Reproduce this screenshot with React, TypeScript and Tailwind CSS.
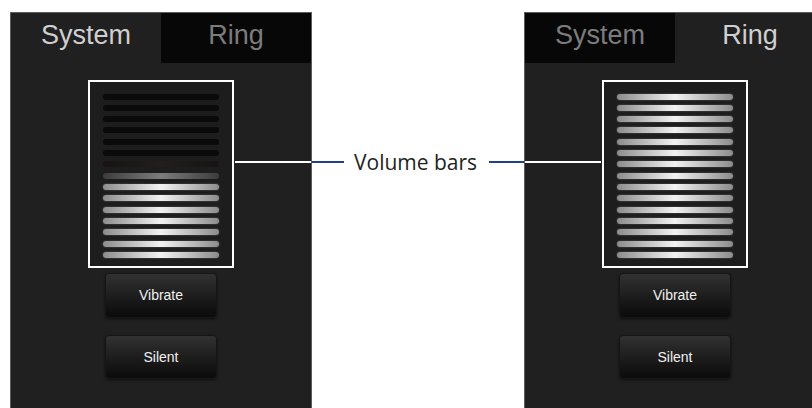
type Level = 'off' | 'faint' | 'dim' | 'on'

const SYSTEM_LEVELS: Level[] = [
  'off', 'off', 'off', 'off', 'off', 'off', 'faint', 'dim',
  'on', 'on', 'on', 'on', 'on', 'on', 'on',
]
const RING_LEVELS: Level[] = Array(15).fill('on')

const BAR_CLASSES: Record<Level, string> = {
  off: 'bg-[#0a0a0a]',
  faint: 'bg-[linear-gradient(to_right,#181414,#231d1d_50%,#181414)]',
  dim: 'bg-[linear-gradient(to_right,#3c3c3c,#7c7c7c_50%,#3c3c3c)]',
  on: 'bg-[linear-gradient(to_right,#8c8c8c,#f2f2f2_50%,#8c8c8c)] shadow-[0_0_2px_rgba(255,255,255,0.3)]',
}

function VolumeBox({ levels }: { levels: Level[] }) {
  return (
    <div className="w-[146px] h-[188px] mt-[17px] border-2 border-white bg-[#1d1d1d] px-[13px] pt-[11.5px] flex flex-col gap-[5.33px]">
      {levels.map((lv, i) => (
        <div key={i} className={`h-[6px] rounded-full ${BAR_CLASSES[lv]}`} />
      ))}
    </div>
  )
}

function PhoneButton({ label, className = '' }: { label: string; className?: string }) {
  return (
    <button className={`w-[112px] rounded-[4px] border border-[#161616] bg-gradient-to-b from-[#323232] to-[#0b0b0b] shadow-[0_1px_3px_rgba(0,0,0,0.6)] text-[14px] text-[#f0f0f0] font-['Liberation_Sans',Arial,sans-serif] ${className}`}>
      {label}
    </button>
  )
}

function Panel({ active, levels, side }: { active: 'System' | 'Ring'; levels: Level[]; side: 'left' | 'right' }) {
  const tab = (name: 'System' | 'Ring') => (
    <div
      className={`flex-1 h-[50px] pt-[9px] text-center text-[27px] leading-[27px] font-['Liberation_Sans',Arial,sans-serif] ${
        active === name ? 'text-[#cfcfcf]' : 'bg-[#070707] text-[#7c7c7c]'
      }`}>
      {name}
    </div>
  )
  return (
    <div className="relative w-[302px] h-[396px] shrink-0 border-t border-x border-[#5c5c5c] bg-[#202020] flex flex-col items-center">
      <div className="flex w-full">
        {tab('System')}
        {tab('Ring')}
      </div>
      <VolumeBox levels={levels} />
      <PhoneButton label="Vibrate" className="mt-[5px] h-[45px]" />
      <PhoneButton label="Silent" className="mt-[17px] h-[44px]" />
      {side === 'left' ? (
        <div className="absolute left-[224px] top-[148px] w-[76px] h-[2px] bg-white" />
      ) : (
        <div className="absolute left-0 top-[148px] w-[76px] h-[2px] bg-white" />
      )}
    </div>
  )
}

export default function App() {
  return (
    <div className="w-[812px] h-[408px] bg-white flex items-start pt-[12px] overflow-hidden">
      <div className="ml-[10px]">
        <Panel active="System" levels={SYSTEM_LEVELS} side="left" />
      </div>
      <div className="w-[212px] shrink-0 pt-[137px]">
        <div className="h-[26px] flex items-center">
          <div className="w-[32px] h-[2px] bg-[#1f418c]" />
          <span className="ml-[10px] mr-[12px] text-[21px] leading-none text-[#231f20] font-['Open_Sans',sans-serif] whitespace-nowrap">
            Volume bars
          </span>
          <div className="flex-1 h-[2px] bg-[#1f418c]" />
        </div>
      </div>
      <Panel active="Ring" levels={RING_LEVELS} side="right" />
    </div>
  )
}
